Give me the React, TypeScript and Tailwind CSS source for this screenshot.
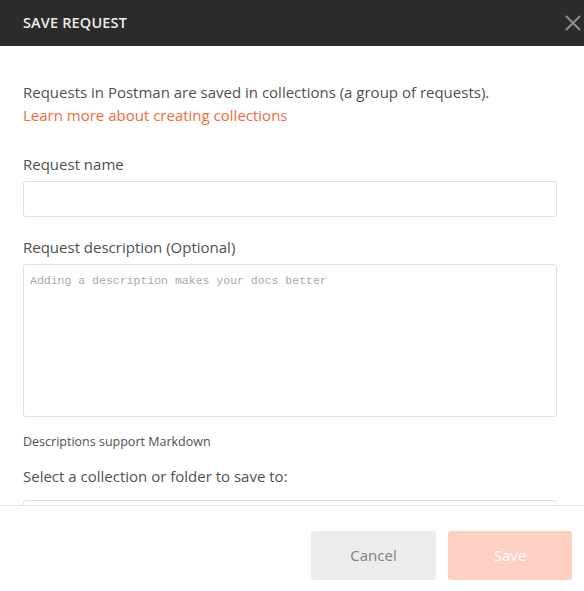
export default function App() {
  return (
    <div className="w-[584px] h-[591px] overflow-hidden bg-white flex flex-col font-['Open_Sans',sans-serif]">
      {/* Header */}
      <div className="h-[46px] shrink-0 bg-[#2b2b2b] flex items-center justify-between pl-[23px]">
        <h1 className="text-[14.5px] font-semibold tracking-[0.15px] text-[#ededed]">SAVE REQUEST</h1>
        <svg className="w-[16px] h-[16px] mr-[3px]" viewBox="0 0 16 16" fill="none">
          <path d="M1 1L15 15M15 1L1 15" stroke="#8f8f8f" strokeWidth="2" />
        </svg>
      </div>

      {/* Body */}
      <div className="flex-1 overflow-hidden pl-[23px] pr-[27px] pt-[35px]">
        <p className="text-[15px] leading-[23px] text-[#505050]">
          Requests in Postman are saved in collections (a group of requests).
          <br />
          <a className="text-[#f26b3a]">Learn more about creating collections</a>
        </p>

        <label className="block mt-[26px] text-[15px] leading-[22px] text-[#505050]">Request name</label>
        <input
          className="mt-[6px] block w-full h-[36px] rounded-[3px] border border-[#e0e0e0] outline-none px-2 text-[13px]"
          type="text"
        />

        <label className="block mt-[19px] text-[15px] leading-[22px] text-[#505050]">
          Request description (Optional)
        </label>
        <textarea
          className="mt-[6px] block w-full h-[153px] resize-none rounded-[3px] border border-[#e0e0e0] outline-none px-[6px] py-[7px] font-['Liberation_Mono',monospace] text-[11.5px] leading-[18px] placeholder:text-[#a8a8a8]"
          placeholder="Adding a description makes your docs better"
        />

        <p className="mt-[16px] text-[12.5px] leading-[17px] text-[#505050]">Descriptions support Markdown</p>

        <p className="mt-[15px] text-[15px] leading-[22px] text-[#505050]">Select a collection or folder to save to:</p>
        <div className="mt-[13px] h-[40px] rounded-[3px] border border-[#e0e0e0]" />
      </div>

      {/* Footer */}
      <div className="h-[86px] shrink-0 border-t border-[#e6e6e6] flex justify-end items-start gap-[12px] pt-[25px] pr-[12px]">
        <button className="w-[125px] h-[49px] rounded-[3px] bg-[#ececec] text-[15px] text-[#808080]">Cancel</button>
        <button className="w-[124px] h-[49px] rounded-[3px] bg-[#fdd0c1] text-[15px] text-white">Save</button>
      </div>
    </div>
  );
}
